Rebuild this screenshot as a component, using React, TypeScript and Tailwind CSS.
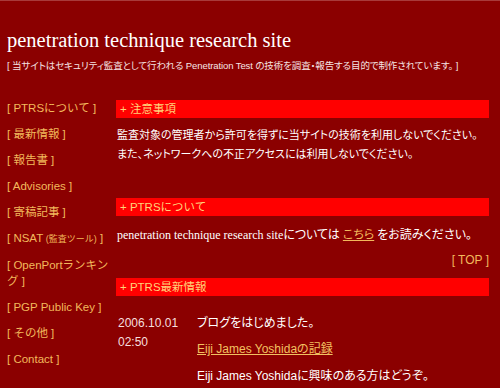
const navItems = [
  'PTRSについて',
  '最新情報',
  '報告書',
  'Advisories',
  '寄稿記事',
  'NSAT',
  'OpenPortランキング',
  'PGP Public Key',
  'その他',
  'Contact',
];

const sans = "font-['Liberation_Sans','Noto_Sans_CJK_JP',sans-serif]";
const serif = "font-['Liberation_Serif','Noto_Sans_CJK_JP',serif]";

function Bar({ title }: { title: string }) {
  return (
    <div className={`h-[18px] bg-[#ff0000] pl-1 text-[11.5px] leading-[18px] text-[#ffd27a] ${sans}`}>
      + {title}
    </div>
  );
}

export default function App() {
  return (
    <div className="h-[388px] w-[500px] overflow-hidden border-t border-[#a83a3a] bg-[#8b0000]">
      <header className="px-[7px] pt-[27px]">
        <h1 className={`text-[20.5px] leading-[25px] text-white ${serif}`}>
          penetration technique research site
        </h1>
        <p className={`mt-[6px] text-[9.5px] leading-[14px] tracking-[-0.1px] text-[#f6e4e4] ${sans} [font-feature-settings:'palt']`}>
          [ 当サイトはセキュリティ監査として行われる Penetration Test の技術を調査・報告する目的で制作されています。 ]
        </p>
      </header>

      <div className="mt-[26px] flex">
        <nav className={`mt-[1px] w-[116px] shrink-0 pr-[4px] pl-[7px] text-[11.5px] leading-[16px] text-[#f2b95c] ${sans}`}>
          <ul className="flex flex-col gap-[10px]">
            {navItems.map((item) => (
              <li key={item}>
                [ {item}
                {item === 'NSAT' && <span className="text-[9px]"> (監査ツール)</span>} ]
              </li>
            ))}
          </ul>
        </nav>

        <main className="mt-[1px] w-[373px] shrink-0 text-[12px] leading-[19px] text-white">
          <Bar title="注意事項" />
          <p className={`mt-[8px] pl-px text-[11px] ${serif} [font-feature-settings:'palt']`}>
            監査対象の管理者から許可を得ずに当サイトの技術を利用しないでください。
            <br />
            また、ネットワークへの不正アクセスには利用しないでください。
          </p>

          <div className="mt-[34px]">
            <Bar title="PTRSについて" />
          </div>
          <p className={`mt-[10px] pl-px ${serif} [font-feature-settings:'palt']`}>
            penetration technique research siteについては{' '}
            <a className="text-[#f2b95c] underline">こちら</a> をお読みください。
          </p>
          <div className={`mt-[6px] text-right text-[#f2b95c] ${sans}`}>[ TOP ]</div>

          <div className="mt-[8px]">
            <Bar title="PTRS最新情報" />
          </div>
          <div className={`mt-[18px] flex ${sans} [font-feature-settings:'palt']`}>
            <div className="w-[81px] shrink-0 pl-[2px] text-[#f6dede]">
              2006.10.01
              <br />
              02:50
            </div>
            <div>
              <p>ブログをはじめました。</p>
              <p className="mt-[7px]">
                <a className="text-[#f2c060] underline">Eiji James Yoshidaの記録</a>
              </p>
              <p className="mt-[8px]">Eiji James Yoshidaに興味のある方はどうぞ。</p>
            </div>
          </div>
        </main>
      </div>
    </div>
  );
}
